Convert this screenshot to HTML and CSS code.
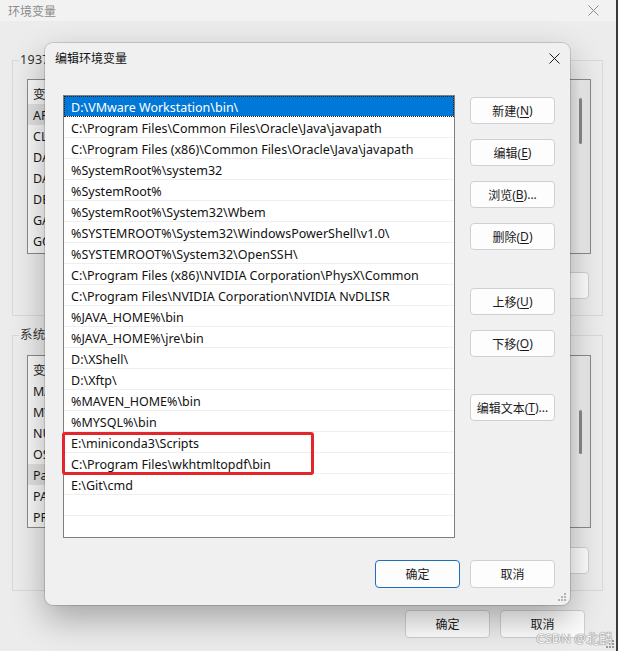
FILE: index.html
```html
<!DOCTYPE html>
<html lang="zh-CN">
<head>
<meta charset="utf-8">
<title>编辑环境变量</title>
<link rel="stylesheet" href="styles.css">
</head>
<body>
<div class="screen">
  <div class="bgwin">
    <div class="bg-title">
      <span>环境变量</span>
      <svg class="bg-close" width="11" height="11" viewBox="0 0 11 11"><path d="M0.5 0.5L10.5 10.5M10.5 0.5L0.5 10.5" stroke="#8c8c8c" stroke-width="1" fill="none"/></svg>
    </div>

    <fieldset class="group g-user">
      <legend>19376的用户变量</legend>
      <div class="vlist vl-user">
        <div class="vl-body">
          <div class="vl-head"><span class="c1">变量</span></div>
          <div class="vl-row hl"><span class="c1">APPDATA</span></div>
          <div class="vl-row"><span class="c1">CLASSPATH</span></div>
          <div class="vl-row"><span class="c1">DASH</span></div>
          <div class="vl-row"><span class="c1">DATA</span></div>
          <div class="vl-row"><span class="c1">DEEP</span></div>
          <div class="vl-row"><span class="c1">GATE</span></div>
          <div class="vl-row"><span class="c1">GOPATH</span></div>
        </div>
        <div class="vscroll"><div class="thumb t-user"></div></div>
      </div>
      <div class="bg-btns">
        <button class="btn bgbtn"></button>
        <button class="btn bgbtn"></button>
        <button class="btn bgbtn"></button>
      </div>
    </fieldset>

    <fieldset class="group g-sys">
      <legend>系统变量</legend>
      <div class="vlist vl-sys">
        <div class="vl-body">
          <div class="vl-head"><span class="c1">变量</span></div>
          <div class="vl-row"><span class="c1">MAVEN</span></div>
          <div class="vl-row"><span class="c1">MYSQL</span></div>
          <div class="vl-row"><span class="c1">NUMBER</span></div>
          <div class="vl-row"><span class="c1">OS</span></div>
          <div class="vl-row hl"><span class="c1">Path</span></div>
          <div class="vl-row"><span class="c1">PATHEXT</span></div>
          <div class="vl-row"><span class="c1">PROC</span></div>
        </div>
        <div class="vscroll"><div class="thumb t-sys"></div></div>
      </div>
      <div class="bg-btns btns-sys">
        <button class="btn bgbtn"></button>
        <button class="btn bgbtn"></button>
        <button class="btn bgbtn"></button>
      </div>
    </fieldset>

    <div class="bg-foot">
      <button class="btn bgbtn">确定</button>
      <button class="btn bgbtn">取消</button>
    </div>
  </div>
  <div class="edge"></div>

  <div class="dlg">
    <div class="dlg-title">
      <span>编辑环境变量</span>
      <svg class="dlg-close" width="11" height="11" viewBox="0 0 11 11"><path d="M0.5 0.5L10.5 10.5M10.5 0.5L0.5 10.5" stroke="#1a1a1a" stroke-width="1" fill="none"/></svg>
    </div>
    <div class="dlg-body">
      <div class="plist">
        <div class="prow sel">D:\VMware Workstation\bin\</div>
        <div class="prow">C:\Program Files\Common Files\Oracle\Java\javapath</div>
        <div class="prow">C:\Program Files (x86)\Common Files\Oracle\Java\javapath</div>
        <div class="prow">%SystemRoot%\system32</div>
        <div class="prow">%SystemRoot%</div>
        <div class="prow">%SystemRoot%\System32\Wbem</div>
        <div class="prow">%SYSTEMROOT%\System32\WindowsPowerShell\v1.0\</div>
        <div class="prow">%SYSTEMROOT%\System32\OpenSSH\</div>
        <div class="prow">C:\Program Files (x86)\NVIDIA Corporation\PhysX\Common</div>
        <div class="prow">C:\Program Files\NVIDIA Corporation\NVIDIA NvDLISR</div>
        <div class="prow">%JAVA_HOME%\bin</div>
        <div class="prow">%JAVA_HOME%\jre\bin</div>
        <div class="prow">D:\XShell\</div>
        <div class="prow">D:\Xftp\</div>
        <div class="prow">%MAVEN_HOME%\bin</div>
        <div class="prow">%MYSQL%\bin</div>
        <div class="prow">E:\miniconda3\Scripts</div>
        <div class="prow">C:\Program Files\wkhtmltopdf\bin</div>
        <div class="prow">E:\Git\cmd</div>
        <div class="prow"></div>
        <div class="prow last"></div>
        <div class="mark"></div>
      </div>
      <div class="side">
        <button class="btn">新建(<u>N</u>)</button>
        <button class="btn">编辑(<u>E</u>)</button>
        <button class="btn">浏览(<u>B</u>)...</button>
        <button class="btn">删除(<u>D</u>)</button>
        <button class="btn gap1">上移(<u>U</u>)</button>
        <button class="btn">下移(<u>O</u>)</button>
        <button class="btn gap2">编辑文本(<u>T</u>)...</button>
      </div>
    </div>
    <div class="dlg-foot">
      <button class="btn big default">确定</button>
      <button class="btn big">取消</button>
    </div>
    <svg class="grip dlg-grip" width="8" height="8" viewBox="0 0 8 8"><g fill="#b4b4b4"><rect x="6" y="0" width="2" height="2"/><rect x="3" y="3" width="2" height="2"/><rect x="6" y="3" width="2" height="2"/><rect x="0" y="6" width="2" height="2"/><rect x="3" y="6" width="2" height="2"/><rect x="6" y="6" width="2" height="2"/></g></svg>
  </div>

  <svg class="grip win-grip" width="8" height="8" viewBox="0 0 8 8"><g fill="#9a9a9a"><rect x="6" y="0" width="2" height="2"/><rect x="3" y="3" width="2" height="2"/><rect x="6" y="3" width="2" height="2"/><rect x="0" y="6" width="2" height="2"/><rect x="3" y="6" width="2" height="2"/><rect x="6" y="6" width="2" height="2"/></g></svg>
  <div class="watermark">CSDN @北麟</div>
</div>
</body>
</html>
```

FILE: styles.css
```css
* { box-sizing: border-box; }
html, body { margin: 0; padding: 0; }
body {
  width: 618px;
  height: 651px;
  overflow: hidden;
  background: #3a3a3a;
  font-family: "Noto Sans", "Noto Sans CJK SC", sans-serif;
  font-size: 12px;
  color: #1a1a1a;
}
.screen { position: relative; width: 618px; height: 651px; }

/* ---------- background window ---------- */
.bgwin {
  width: 616px;
  height: 651px;
  background: #ececec;
  display: flex;
  flex-direction: column;
  padding: 0 13px 0 12px;
}
.bg-title {
  height: 21px;
  margin: 0 -13px 0 -12px;
  padding: 0 15px 0 8px;
  display: flex;
  align-items: center;
  justify-content: space-between;
  color: #8c8c8c;
  background: #f2f2f2;
}
.bg-close { margin-right: 2px; }
.group {
  margin: 0;
  padding: 11px 11px 16px 14px;
  border: 1px solid #d9d9d9;
  min-width: 0;
}
.group legend {
  padding: 0 1px;
  margin-left: -8px;
  line-height: 16px;
  font-size: 12.5px;
  letter-spacing: 0.3px;
  color: #333;
}
.g-user { margin-top: 31px; }
.g-sys { margin-top: 11px; padding-top: 12px; }

.vlist {
  display: flex;
  border: 1px solid #8a8a8a;
  background: #f9f9f9;
}
.vl-user { height: 175px; }
.vl-sys { height: 173px; }
.vl-body { flex: 1; overflow: hidden; }
.vl-head, .vl-row {
  display: flex;
  white-space: nowrap;
  padding-left: 5px;
  font-size: 12.5px;
}
.vl-head { height: 24px; align-items: center; padding-top: 2px; }
.vl-row { height: 21px; align-items: center; padding-top: 2px; }
.vl-row.hl { background: #e2e2e2; }
.c1 { width: 190px; }
.vscroll {
  width: 20px;
  background: linear-gradient(90deg, #e9e9e9, #f2f2f2 50%, #e6e6e6);
  display: flex;
  justify-content: center;
}
.thumb { width: 3px; border-radius: 2px; background: #8a8a8a; }
.t-user { margin-top: 18px; height: 46px; }
.t-sys { margin-top: 54px; height: 44px; }

.bg-btns {
  display: flex;
  justify-content: flex-end;
  gap: 10px;
  margin-top: 18px;
  margin-right: 2px;
}
.btns-sys { margin-top: 19px; }
.bg-foot {
  display: flex;
  justify-content: flex-end;
  gap: 10px;
  margin-top: 19px;
  padding-right: 18px;
}
.bgbtn {
  height: 27px;
  background: #efefef;
  border-color: #c9c9c9;
  color: #222;
}
.bg-foot .bgbtn { height: 28px; }

.edge {
  position: absolute;
  right: 0;
  top: 0;
  width: 2px;
  height: 651px;
  background: #3a3a3a;
}

/* ---------- buttons ---------- */
.btn {
  font: inherit;
  width: 85px;
  height: 27px;
  padding: 0;
  display: flex;
  align-items: center;
  justify-content: center;
  background: #fdfdfd;
  border: 1px solid #d0d0d0;
  border-radius: 4px;
  color: #1b1b1b;
  white-space: nowrap;
}
.btn u { text-underline-offset: 2px; }
.btn.big { height: 28px; }
.btn.default { border-color: #1a6fc1; }

/* ---------- dialog ---------- */
.dlg {
  position: absolute;
  left: 45px;
  top: 43px;
  width: 525px;
  height: 562px;
  background: #f0f0f0;
  border-radius: 8px;
  box-shadow: 0 0 0 1px rgba(0,0,0,0.14), 0 14px 34px rgba(0,0,0,0.30);
  display: flex;
  flex-direction: column;
}
.dlg-title {
  height: 30px;
  padding: 0 10px 0 10px;
  display: flex;
  align-items: center;
  justify-content: space-between;
  color: #111;
}
.dlg-body {
  display: flex;
  gap: 15px;
  padding: 22px 15px 0 18px;
}
.plist {
  position: relative;
  width: 392px;
  height: 443px;
  border: 1px solid #7f7f7f;
  background: #fff;
}
.prow {
  height: 21px;
  line-height: 16px;
  padding: 4px 0 0 7px;
  font-size: 12.5px;
  border-bottom: 1px solid #efefef;
  white-space: nowrap;
  color: #111;
}
.prow.last { border-bottom: 0; }
.prow.sel {
  background: #0078d7;
  color: #fff;
  outline: 1px dotted #222;
  outline-offset: -1px;
}
.mark {
  position: absolute;
  left: -2px;
  top: 336px;
  width: 252px;
  height: 43px;
  border: 3px solid #e3262b;
  border-radius: 3px;
}
.side {
  display: flex;
  flex-direction: column;
  gap: 15px;
  padding-top: 2px;
}
.side .gap1 { margin-top: 23px; }
.side .gap2 { margin-top: 22px; }
.dlg-foot {
  display: flex;
  justify-content: flex-end;
  gap: 10px;
  padding: 22px 15px 0 0;
}
.grip { position: absolute; }
.dlg-grip { right: 4px; bottom: 4px; }
.win-grip { right: 4px; bottom: 3px; }

.watermark {
  position: absolute;
  right: 6px;
  bottom: 4px;
  font-size: 13px;
  color: #f7f7f7;
  text-shadow: 0 0 1px #8a8a8a, 0 0 1px #8a8a8a, 0 0 1px #8a8a8a;
}
```
